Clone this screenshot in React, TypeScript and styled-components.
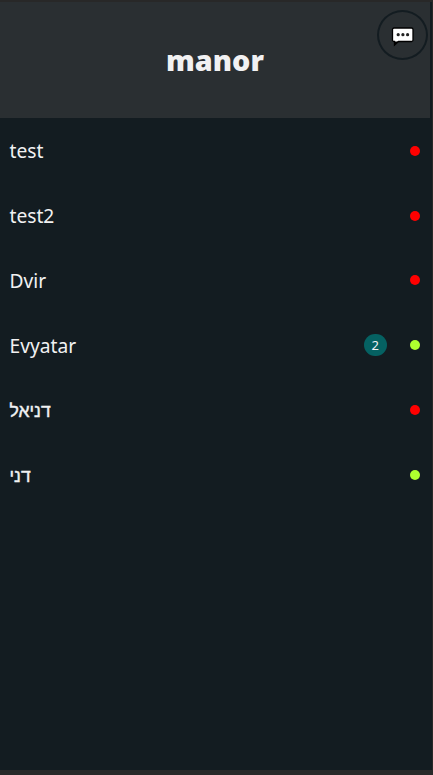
import React from 'react';
import styled, { createGlobalStyle } from 'styled-components';

const GlobalStyle = createGlobalStyle`
  * { box-sizing: border-box; }
  body { margin: 0; background: #282828; font-family: "Noto Sans", "Liberation Sans", sans-serif; }
`;

const Frame = styled.div`
  height: 775px;
  padding: 2px 1px 5px 0;
  overflow: hidden;
  background: #282828;
`;

const Screen = styled.main`
  position: relative;
  height: 768px;
  padding-right: 2px;
  background: #131c21;
  color: #f1f1f2;
`;

const Header = styled.header`
  height: 116px;
  display: flex;
  align-items: center;
  justify-content: center;
  background: #2a2f32;
`;

const Title = styled.h1`
  margin: 0;
  font-family: "Open Sans", "Noto Sans", sans-serif;
  font-size: 28.8px;
  line-height: 40px;
  font-weight: 800;
  color: #f1f1f2;
`;

const ChatButton = styled.button`
  position: absolute;
  top: 8px;
  right: 4px;
  width: 51px;
  height: 50px;
  display: flex;
  align-items: center;
  justify-content: center;
  padding: 0;
  border: 2px solid #131c21;
  border-radius: 50%;
  background: transparent;
`;

const List = styled.ul`
  margin: 0;
  padding: 0.4px 10px 0 9.5px;
  list-style: none;
`;

const Row = styled.li`
  height: 64.8px;
  display: flex;
  align-items: center;
`;

const Name = styled.span<{ $hebrew?: boolean }>`
  flex: 1;
  padding-top: ${p => (p.$hebrew ? '3px' : '0.8px')};
  font-family: ${p => (p.$hebrew ? '"Liberation Sans"' : '"Noto Sans"')}, sans-serif;
  font-size: ${p => (p.$hebrew ? '17.6px' : '19.2px')};
  -webkit-text-stroke: ${p => (p.$hebrew ? '0.4px currentColor' : '0')};
  line-height: 26px;
`;

const Badge = styled.span`
  width: 22.5px;
  height: 22.5px;
  margin-right: 23.5px;
  border-radius: 50%;
  background: #056162;
  font-size: 13px;
  line-height: 22.5px;
  text-align: center;
`;

const Dot = styled.span<{ $online: boolean }>`
  width: 10px;
  height: 10px;
  border-radius: 50%;
  background: ${p => (p.$online ? 'greenyellow' : 'red')};
`;

type Contact = { name: string; online: boolean; unread?: number; hebrew?: boolean };

const contacts: Contact[] = [
  { name: 'test', online: false },
  { name: 'test2', online: false },
  { name: 'Dvir', online: false },
  { name: 'Evyatar', online: true, unread: 2 },
  { name: 'דניאל', online: false, hebrew: true },
  { name: 'דני', online: true, hebrew: true },
];

const ChatIcon = () => (
  <svg width="24" height="24" viewBox="0 0 24 24" aria-hidden="true">
    <path
      d="M3 5h17.500a1.500 1.500 0 0 1 1.500 1.500v10.500a1.500 1.500 0 0 1-1.500 1.500H7.500L3.500 22V18.500H3a1.500 1.500 0 0 1-1.500-1.500V6.500A1.500 1.500 0 0 1 3 5Z"
      fill="#fff"
      stroke="#000"
      strokeWidth="1.300"
    />
    <path d="M3 18.500H7.500L3 23Z" fill="#000" />
    <circle cx="7.200" cy="11.700" r="1.600" fill="#222" />
    <circle cx="11.900" cy="11.700" r="1.600" fill="#222" />
    <circle cx="16.600" cy="11.700" r="1.600" fill="#222" />
  </svg>
);

export default function App() {
  return (
    <>
      <GlobalStyle />
      <Frame>
        <Screen>
          <Header>
            <Title>manor</Title>
            <ChatButton aria-label="New chat">
              <ChatIcon />
            </ChatButton>
          </Header>
          <List>
            {contacts.map(c => (
              <Row key={c.name}>
                <Name $hebrew={c.hebrew}>{c.name}</Name>
                {c.unread && <Badge>{c.unread}</Badge>}
                <Dot $online={c.online} />
              </Row>
            ))}
          </List>
        </Screen>
      </Frame>
    </>
  );
}
